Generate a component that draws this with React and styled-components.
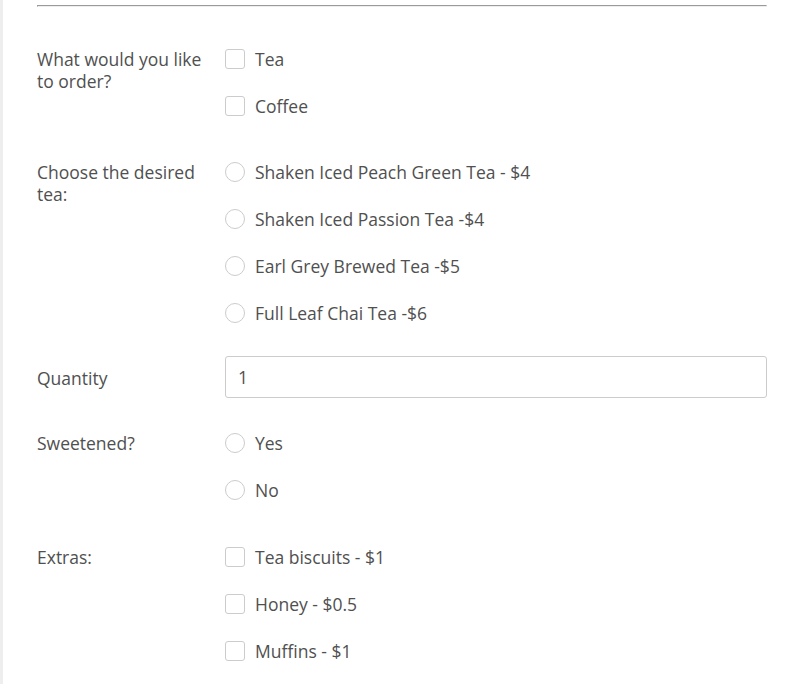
import { useState } from 'react'
import styled, { createGlobalStyle } from 'styled-components'

const teas = [
  'Shaken Iced Peach Green Tea - $4',
  'Shaken Iced Passion Tea -$4',
  'Earl Grey Brewed Tea -$5',
  'Full Leaf Chai Tea -$6'
]

const extras = ['Tea biscuits - $1', 'Honey - $0.5', 'Muffins - $1']

const App = () => {
  const [order, setOrder] = useState([])
  const [tea, setTea] = useState('')
  const [quantity, setQuantity] = useState('1')
  const [sweet, setSweet] = useState('')
  const [picked, setPicked] = useState([])

  const toggle = (list, setList, value) => {
    setList(list.includes(value) ? list.filter(v => v !== value) : [...list, value])
  }

  return (
    <Page>
      <GlobalStyle />
      <Rule />
      <Form onSubmit={e => e.preventDefault()}>
        <Row $after={42}>
          <Label>What would you like to order?</Label>
          <Options>
            {['Tea', 'Coffee'].map(item => (
              <Option key={item}>
                <Box
                  type='checkbox'
                  checked={order.includes(item)}
                  onChange={() => toggle(order, setOrder, item)}
                />
                {item}
              </Option>
            ))}
          </Options>
        </Row>

        <Row $after={31}>
          <Label>Choose the desired tea:</Label>
          <Options>
            {teas.map(item => (
              <Option key={item}>
                <Radio
                  type='radio'
                  name='tea'
                  checked={tea === item}
                  onChange={() => setTea(item)}
                />
                {item}
              </Option>
            ))}
          </Options>
        </Row>

        <Row $after={33} $center>
          <Label>Quantity</Label>
          <Input value={quantity} onChange={e => setQuantity(e.target.value)} />
        </Row>

        <Row $after={43}>
          <Label>Sweetened?</Label>
          <Options>
            {['Yes', 'No'].map(item => (
              <Option key={item}>
                <Radio
                  type='radio'
                  name='sweet'
                  checked={sweet === item}
                  onChange={() => setSweet(item)}
                />
                {item}
              </Option>
            ))}
          </Options>
        </Row>

        <Row $after={0}>
          <Label>Extras:</Label>
          <Options>
            {extras.map(item => (
              <Option key={item}>
                <Box
                  type='checkbox'
                  checked={picked.includes(item)}
                  onChange={() => toggle(picked, setPicked, item)}
                />
                {item}
              </Option>
            ))}
          </Options>
        </Row>
      </Form>
    </Page>
  )
}

// Styles
const GlobalStyle = createGlobalStyle`
  body {
    margin: 0;
    background: #fff;
    font-family: 'Open Sans', 'Liberation Sans', sans-serif;
    color: #505050;
  }
`

const Page = styled.div`
  min-height: 684px;
  box-sizing: border-box;
  border-left: 3px solid #eee;
  padding: 5px 23px 0 34px;
`

const Rule = styled.hr`
  margin: 0;
  height: 0;
  border-style: solid;
  border-width: 1px;
  border-color: #9a9a9a #eee #eee #9a9a9a;
`

const Form = styled.form`
  padding-top: 40px;
`

const Row = styled.div`
  display: grid;
  grid-template-columns: 188px 1fr;
  align-items: ${p => (p.$center ? 'center' : 'start')};
  margin-bottom: ${p => p.$after}px;
`

const Label = styled.div`
  padding: 1px 15px 0 0;
  font-size: 17.5px;
  line-height: 22px;
`

const Options = styled.div`
  display: flex;
  flex-direction: column;
  gap: 23px;
`

const Option = styled.label`
  display: flex;
  align-items: center;
  gap: 10px;
  height: 24px;
  font-size: 17.5px;
  cursor: pointer;
`

const Box = styled.input`
  appearance: none;
  margin: 0;
  width: 20px;
  height: 20px;
  border: 1px solid #ccc;
  border-radius: 3px;
  background: #fff;
  box-sizing: border-box;
  cursor: pointer;

  &:checked {
    background: #555;
    border-color: #555;
  }
`

const Radio = styled(Box)`
  border-radius: 50%;

  &:checked {
    background: #fff;
    border: 6px solid #555;
  }
`

const Input = styled.input`
  box-sizing: border-box;
  width: 100%;
  height: 42px;
  padding: 0 12px;
  border: 1px solid #ccc;
  border-radius: 3px;
  font-family: 'Open Sans', 'Liberation Sans', sans-serif;
  font-size: 17.5px;
  color: #505050;
  outline: none;
`

export default App
